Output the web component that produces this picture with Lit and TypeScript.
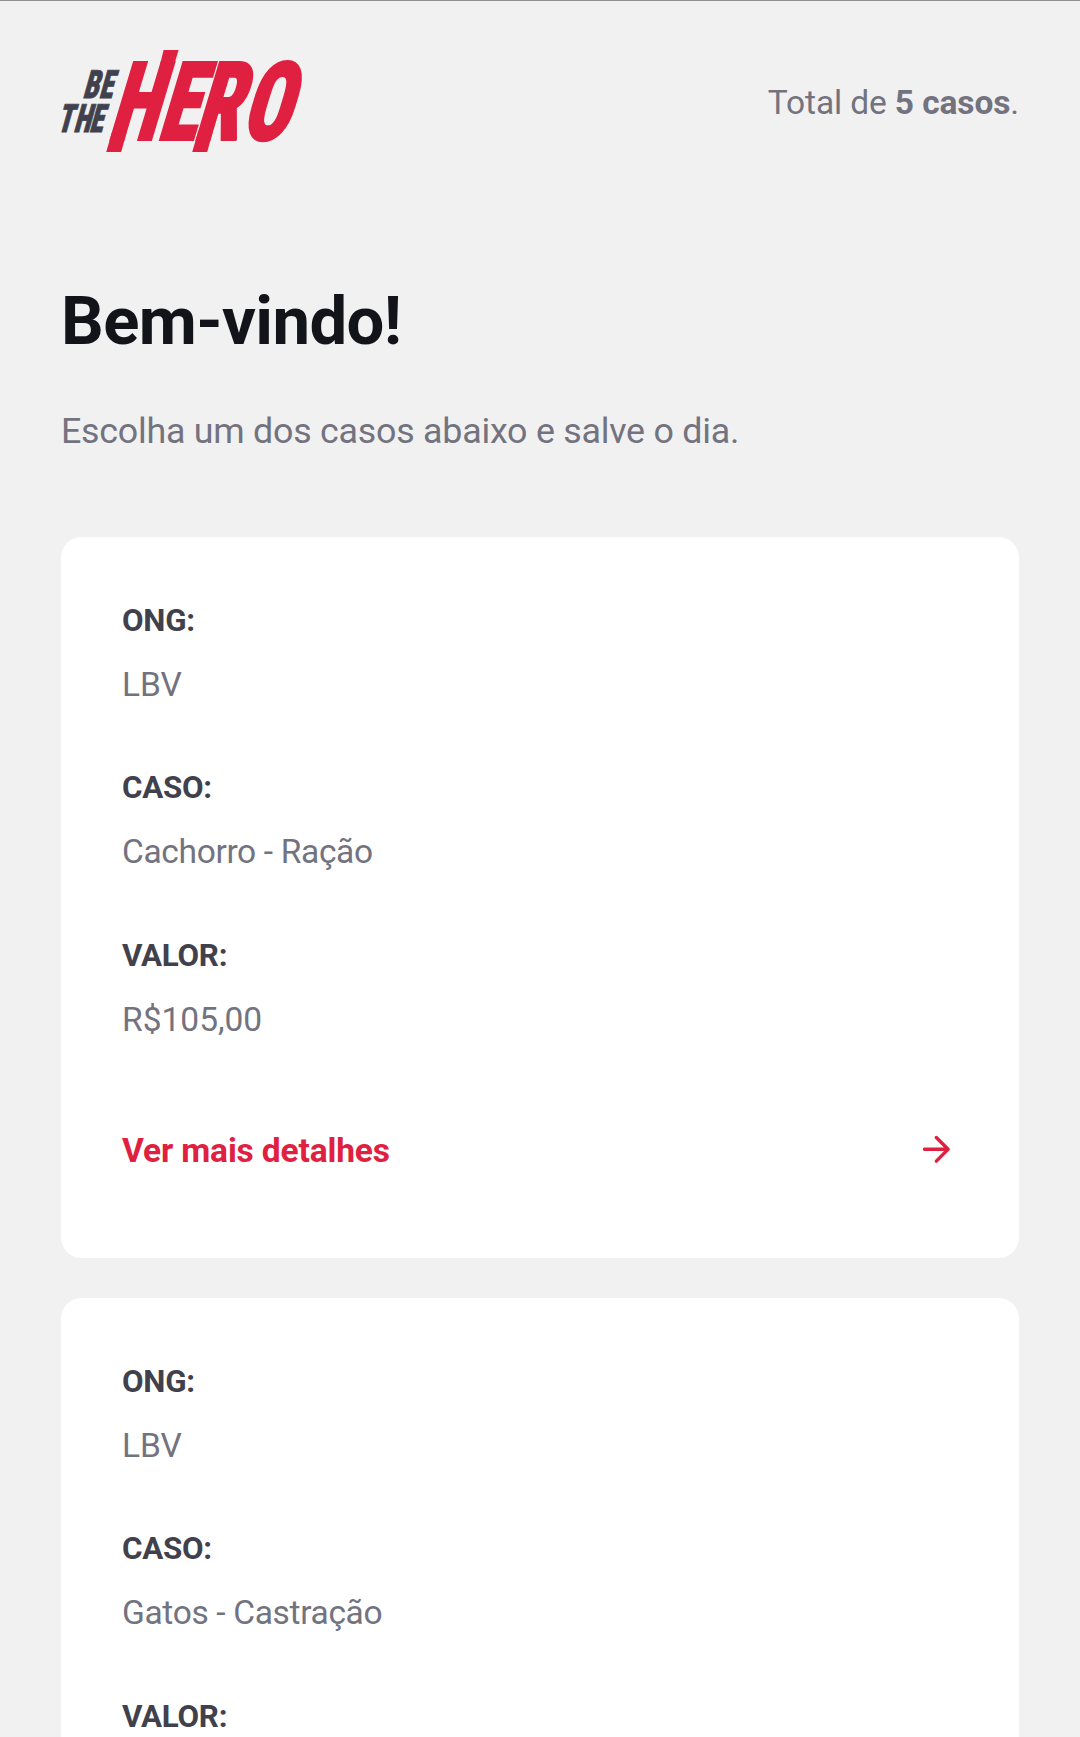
import { LitElement, html, css } from "lit";
import { customElement, property } from "lit/decorators.js";

interface Incident {
  ong: string;
  title: string;
  value: string;
}

const INCIDENTS: Incident[] = [
  { ong: "LBV", title: "Cachorro - Ração", value: "R$105,00" },
  { ong: "LBV", title: "Gatos - Castração", value: "" },
];

@customElement("hero-logo")
export class HeroLogo extends LitElement {
  static styles = css`
    :host {
      display: block;
      width: 243px;
      height: 104px;
    }
    svg {
      display: block;
      overflow: visible;
    }
    text {
      font-family: Roboto, "Roboto Condensed", "Liberation Sans", sans-serif;
      font-weight: 900;
      font-stretch: 75%;
      font-kerning: none;
    }
    .small {
      fill: #41414d;
      stroke: #41414d;
      stroke-width: 0.9;
      font-size: 39.2px;
    }
    .big {
      fill: #e02041;
      stroke: #e02041;
      stroke-width: 2.2;
      font-size: 109.4px;
    }
    .bar {
      fill: #e02041;
    }
  `;

  render() {
    return html`
      <svg width="243" height="104" viewBox="61 49 243 104" role="img" aria-label="Be The Hero">
        <text class="small" transform="matrix(0.7 0 -0.28 1 82.3 98.3)" x="0 23">BE</text>
        <text class="small" transform="matrix(0.7 0 -0.28 1 56.5 132)" x="0 23.4 46">THE</text>
        <text class="big" transform="matrix(0.73 0 -0.3 1 106.4 139.9)" x="0 68 118 182.5">HERO</text>
        <path class="bar" d="M163.6 50H178.6L174.4 64H160.2ZM112.4 131H127L121.2 152H106.2ZM198.4 131H213L207.2 152H192.2Z" />
      </svg>
    `;
  }
}

@customElement("incident-card")
export class IncidentCard extends LitElement {
  @property({ attribute: false }) incident!: Incident;

  static styles = css`
    :host {
      display: block;
      box-sizing: border-box;
      height: 721px;
      padding: 62px 61px 0;
      border-radius: 20.5px;
      background: #fff;
    }
    .fields {
      display: flex;
      flex-direction: column;
      gap: 59.9px;
    }
    .field {
      display: flex;
      flex-direction: column;
      gap: 19.6px;
    }
    .label,
    .value,
    .more {
      line-height: 44px;
    }
    .label {
      font-size: 31.3px;
      font-weight: 700;
      letter-spacing: -0.25px;
      color: #41414d;
    }
    .value {
      font-size: 33.5px;
      color: #737380;
    }
    .words {
      letter-spacing: -0.34px;
    }
    .more {
      display: flex;
      align-items: center;
      justify-content: space-between;
      margin-top: 87.3px;
      font-size: 33.5px;
      font-weight: 700;
      letter-spacing: -0.15px;
      color: #e02041;
    }
    .arrow {
      display: block;
      width: 40.6px;
      height: 40.6px;
      margin: 0 1px 4px 0;
      fill: none;
      stroke: currentColor;
      stroke-width: 2;
      stroke-linecap: round;
      stroke-linejoin: round;
    }
  `;

  private field(label: string, value: string, kind = "") {
    return html`<div class="field">
      <span class="label">${label}</span>
      <span class="value ${kind}">${value}</span>
    </div>`;
  }

  render() {
    const { ong, title, value } = this.incident;
    return html`
      <div class="fields">
        ${this.field("ONG:", ong)} ${this.field("CASO:", title, "words")} ${this.field("VALOR:", value)}
      </div>
      <div class="more">
        <span>Ver mais detalhes</span>
        <svg class="arrow" viewBox="0 0 24 24"><path d="M5 12h14M12 5l7 7-7 7" /></svg>
      </div>
    `;
  }
}

@customElement("app-root")
export class AppRoot extends LitElement {
  static styles = css`
    :host {
      display: block;
      box-sizing: border-box;
      height: 1737px;
      overflow: hidden;
      padding: 48px 61px 0;
      border-top: 1px solid #8f8e92;
      background: #f1f1f1;
      font-family: Roboto, "Liberation Sans", sans-serif;
      color: #737380;
    }
    .header {
      display: flex;
      align-items: center;
      justify-content: space-between;
      height: 104px;
    }
    .total {
      font-size: 33.5px;
      line-height: 44px;
      padding-top: 3px;
      letter-spacing: -0.12px;
    }
    .title {
      margin: 126px 0 0;
      font-size: 67px;
      line-height: 84px;
      font-weight: 700;
      letter-spacing: -0.6px;
      color: #13131a;
    }
    .description {
      margin: 45px 0 0;
      font-size: 35.8px;
      line-height: 46px;
      letter-spacing: -0.24px;
    }
    .list {
      display: flex;
      flex-direction: column;
      gap: 40px;
      margin-top: 83px;
    }
  `;

  render() {
    return html`
      <header class="header">
        <hero-logo></hero-logo>
        <span class="total">Total de <b>5 casos</b>.</span>
      </header>
      <h1 class="title">Bem-vindo!</h1>
      <p class="description">Escolha um dos casos abaixo e salve o dia.</p>
      <main class="list">
        ${INCIDENTS.map((i) => html`<incident-card .incident=${i}></incident-card>`)}
      </main>
    `;
  }
}
